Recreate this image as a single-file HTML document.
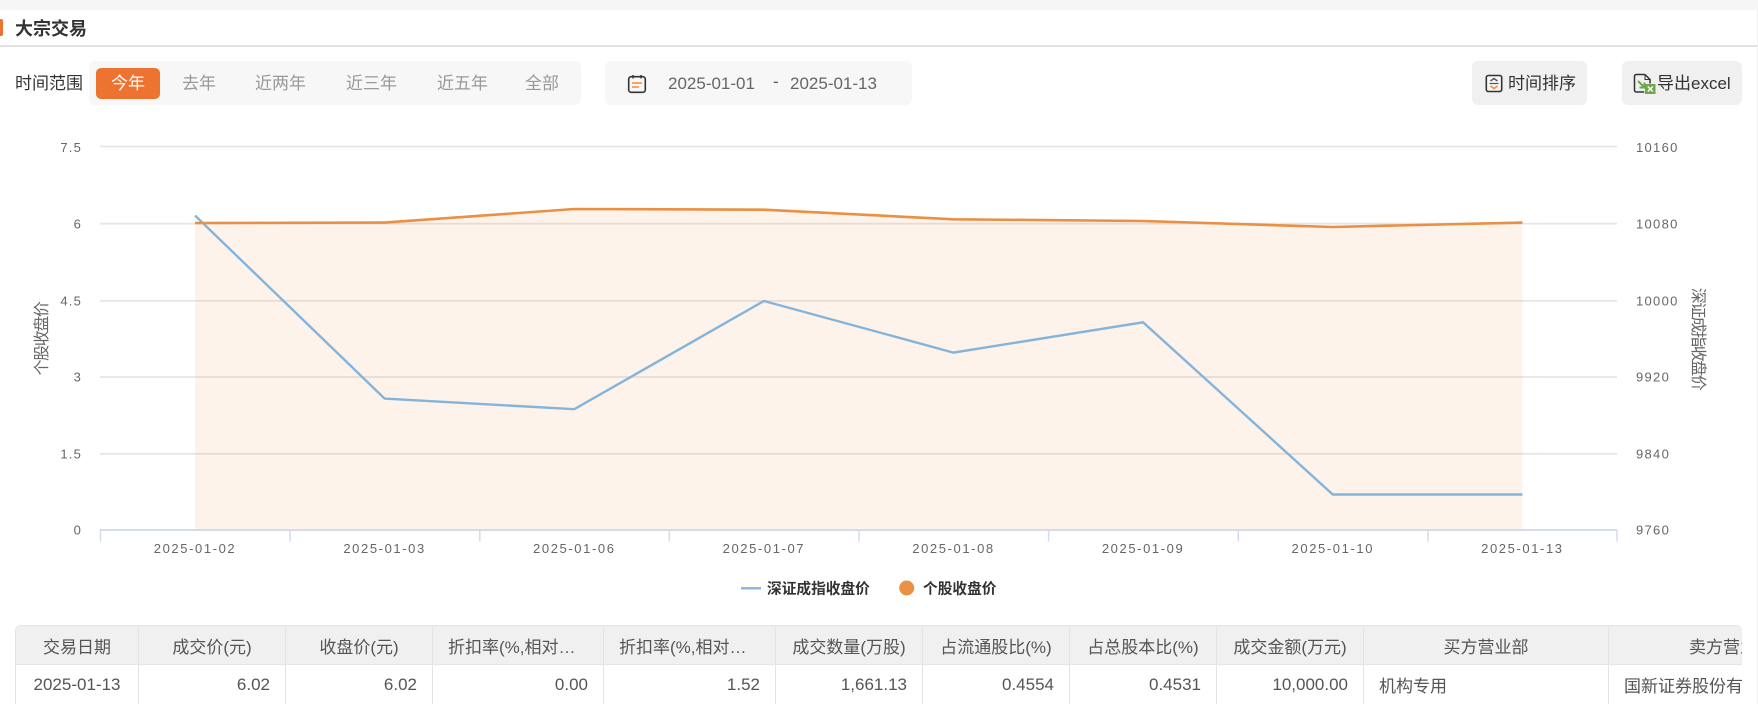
<!DOCTYPE html>
<html lang="zh-CN">
<head>
<meta charset="utf-8">
<title>大宗交易</title>
<style>
html,body{margin:0;padding:0;background:#fff;}
body{width:1758px;height:704px;position:relative;overflow:hidden;font-family:"Liberation Sans","Noto Sans CJK SC",sans-serif;color:#333;}
.a{position:absolute;white-space:nowrap;}
.t{font-size:17px;line-height:20px;height:20px;}
.tab{color:#999;top:74px;}
svg text{font-family:"Liberation Sans","Noto Sans CJK SC",sans-serif;}
.wrap{position:absolute;left:15px;top:625px;width:1727px;height:79px;overflow:hidden;border-top:1px solid #e4e4e4;border-left:1px solid #e4e4e4;border-top-left-radius:6px;border-top-right-radius:6px;box-sizing:border-box;}
table{border-collapse:separate;border-spacing:0;table-layout:fixed;width:1839px;font-size:17px;color:#555;}
th,td{box-sizing:border-box;border-right:1px solid #e4e4e4;border-bottom:1px solid #e4e4e4;padding:0 15px;overflow:hidden;white-space:nowrap;font-weight:normal;}
th{background:#f0f0f0;height:39px;text-align:center;text-overflow:ellipsis;}
td{height:40px;text-align:right;}
td.c{text-align:center;padding:0;}
td.l{text-align:left;}
</style>
</head>
<body>
<div class="a" style="left:0;top:0;width:1758px;height:10px;background:#f6f6f6;"></div>
<div class="a" style="left:1757px;top:10px;width:1px;height:694px;background:#f0f0f0;"></div>
<div class="a" style="left:0;top:19px;width:3px;height:17px;background:#ee7230;border-radius:0 2px 2px 0;"></div>
<div class="a" style="left:15px;top:18px;font-size:18px;line-height:22px;font-weight:bold;color:#333;">大宗交易</div>
<div class="a" style="left:0;top:45px;width:1757px;height:2px;background:#e0e0e0;"></div>

<div class="a t" style="left:15px;top:74px;color:#333;">时间范围</div>
<div class="a" style="left:89px;top:61px;width:492px;height:44px;background:#f7f7f7;border-radius:6px;"></div>
<div class="a" style="left:96px;top:68px;width:64px;height:31px;background:#ee7230;border-radius:5px;"></div>
<div class="a t" style="left:111px;top:74px;color:#fff;">今年</div>
<div class="a t tab" style="left:182px;">去年</div>
<div class="a t tab" style="left:255px;">近两年</div>
<div class="a t tab" style="left:346px;">近三年</div>
<div class="a t tab" style="left:437px;">近五年</div>
<div class="a t tab" style="left:525px;">全部</div>

<div class="a" style="left:605px;top:61px;width:307px;height:44px;background:#f7f7f7;border-radius:6px;"></div>
<svg class="a" style="left:627px;top:74px;" width="20" height="20" viewBox="0 0 20 20">
<rect x="1.7" y="2.700" width="16.6" height="15.6" rx="2.5" fill="none" stroke="#333" stroke-width="1.6"/>
<path d="M6 1v3.500M14 1v3.500" stroke="#333" stroke-width="1.4" fill="none"/>
<path d="M5 9h10M5 13h7" stroke="#f58a3c" stroke-width="1.5" fill="none"/>
</svg>
<div class="a t" style="left:668px;top:74px;color:#666;">2025-01-01</div>
<div class="a t" style="left:773px;top:72px;color:#555;">-</div>
<div class="a t" style="left:790px;top:74px;color:#666;">2025-01-13</div>

<div class="a" style="left:1472px;top:61px;width:115px;height:44px;background:#f0f0f0;border-radius:6px;"></div>
<svg class="a" style="left:1485px;top:74px;" width="18" height="19" viewBox="0 0 18 19">
<rect x="1.3" y="1.500" width="15.400" height="16" rx="2" fill="#f7f7f7" stroke="#333" stroke-width="1.6"/>
<path d="M5.500 7 9 4.500 12.500 7" stroke="#555" stroke-width="1.400" fill="none"/>
<path d="M4.500 9.500h9" stroke="#555" stroke-width="1.200" fill="none"/>
<path d="M5.500 12 9 14.500 12.500 12" stroke="#f58a3c" stroke-width="1.600" fill="none"/>
</svg>
<div class="a t" style="left:1508px;top:74px;color:#333;">时间排序</div>

<div class="a" style="left:1622px;top:61px;width:120px;height:44px;background:#f0f0f0;border-radius:6px;"></div>
<svg class="a" style="left:1633px;top:73px;" width="23" height="21" viewBox="0 0 23 21">
<path d="M12 1.500H3.200A1.700 1.700 0 0 0 1.500 3.200v14.100a1.700 1.700 0 0 0 1.700 1.700h8M12 1.500l5 5v4" fill="none" stroke="#333" stroke-width="1.500"/>
<path d="M12 1.500v5h5" fill="none" stroke="#333" stroke-width="1"/>
<path d="M5 8l6 6M11.500 9.500v5h-5" fill="none" stroke="#6fa84a" stroke-width="2"/>
<rect x="12" y="11" width="10.500" height="10" fill="#6fa84a"/>
<path d="M14.800 13.500l5 5M19.800 13.500l-5 5" stroke="#fff" stroke-width="1.500"/>
</svg>
<div class="a t" style="left:1657px;top:74px;color:#333;">导出excel</div>

<svg class="a" style="left:0;top:130px;" width="1758" height="480" viewBox="0 130 1758 480">
<g stroke="#e6e6e6" stroke-width="1.800" fill="none">
<path d="M100 146.500H1617M100 223.700H1617M100 300.900H1617M100 377H1617M100 453.800H1617"/>
</g>
<path d="M195 223 384.600 222.600 574.300 209 763.900 209.700 953.500 219.300 1143.100 221 1332.800 227 1522.400 222.600V529H195Z" fill="#ec8f45" fill-opacity=".11"/>
<path d="M100 530H1617" stroke="#d4dbea" stroke-width="2" fill="none"/>
<path d="M100.500 530v11.500M290 530v11.500M479.800 530v11.500M669.400 530v11.500M859 530v11.500M1048.600 530v11.500M1238.300 530v11.500M1427.900 530v11.500M1617 530v11.500" stroke="#d4dbea" stroke-width="1.500" fill="none"/>
<path d="M195 215.500 384.600 398.600 574.300 409.200 763.900 301 953.500 352.600 1143.100 322.300 1332.800 494.500 1522.400 494.500" fill="none" stroke="#85b4db" stroke-width="2.400"/>
<path d="M195 223 384.600 222.600 574.300 209 763.900 209.700 953.500 219.300 1143.100 221 1332.800 227 1522.400 222.600" fill="none" stroke="#ea8f43" stroke-width="2.600"/>
<g font-size="13" fill="#666" letter-spacing="1.200" text-anchor="end">
<text x="82" y="152">7.5</text>
<text x="82" y="228.500">6</text>
<text x="82" y="305.500">4.5</text>
<text x="82" y="381.500">3</text>
<text x="82" y="458.500">1.5</text>
<text x="82" y="534.500">0</text>
</g>
<g font-size="13" fill="#666" letter-spacing="1.300">
<text x="1636" y="152">10160</text>
<text x="1636" y="228.500">10080</text>
<text x="1636" y="305.500">10000</text>
<text x="1636" y="381.500">9920</text>
<text x="1636" y="458.500">9840</text>
<text x="1636" y="534.500">9760</text>
</g>
<g font-size="13" fill="#666" letter-spacing="1.600" text-anchor="middle">
<text x="195" y="553">2025-01-02</text>
<text x="384.600" y="553">2025-01-03</text>
<text x="574.300" y="553">2025-01-06</text>
<text x="763.900" y="553">2025-01-07</text>
<text x="953.500" y="553">2025-01-08</text>
<text x="1143.100" y="553">2025-01-09</text>
<text x="1332.800" y="553">2025-01-10</text>
<text x="1522.400" y="553">2025-01-13</text>
</g>
<text transform="translate(47 339) rotate(-90)" font-size="16" letter-spacing="-1.400" fill="#666" text-anchor="middle">个股收盘价</text>
<text transform="translate(1693 338.500) rotate(90)" font-size="16" letter-spacing="-1.500" fill="#666" text-anchor="middle">深证成指收盘价</text>
<path d="M741 588.300h20" stroke="#85b9e6" stroke-width="2.500" fill="none"/>
<text x="767" y="593.500" font-size="14.700" font-weight="bold" fill="#333">深证成指收盘价</text>
<circle cx="906.700" cy="588" r="7.500" fill="#ea9146"/>
<text x="923" y="593.500" font-size="14.700" font-weight="bold" fill="#333">个股收盘价</text>
</svg>

<div class="wrap">
<table>
<colgroup>
<col style="width:123px"><col style="width:147px"><col style="width:147px"><col style="width:171px"><col style="width:172px"><col style="width:147px"><col style="width:147px"><col style="width:147px"><col style="width:147px"><col style="width:245px"><col style="width:246px">
</colgroup>
<tr>
<th>交易日期</th><th>成交价(元)</th><th>收盘价(元)</th><th>折扣率(%,相对当日收盘价)</th><th>折扣率(%,相对前日收盘价)</th><th>成交数量(万股)</th><th>占流通股比(%)</th><th>占总股本比(%)</th><th>成交金额(万元)</th><th>买方营业部</th><th>卖方营业部</th>
</tr>
<tr>
<td class="c">2025-01-13</td><td>6.02</td><td>6.02</td><td>0.00</td><td>1.52</td><td>1,661.13</td><td>0.4554</td><td>0.4531</td><td>10,000.00</td><td class="l">机构专用</td><td class="l">国新证券股份有限公司</td>
</tr>
</table>
</div>
</body>
</html>
